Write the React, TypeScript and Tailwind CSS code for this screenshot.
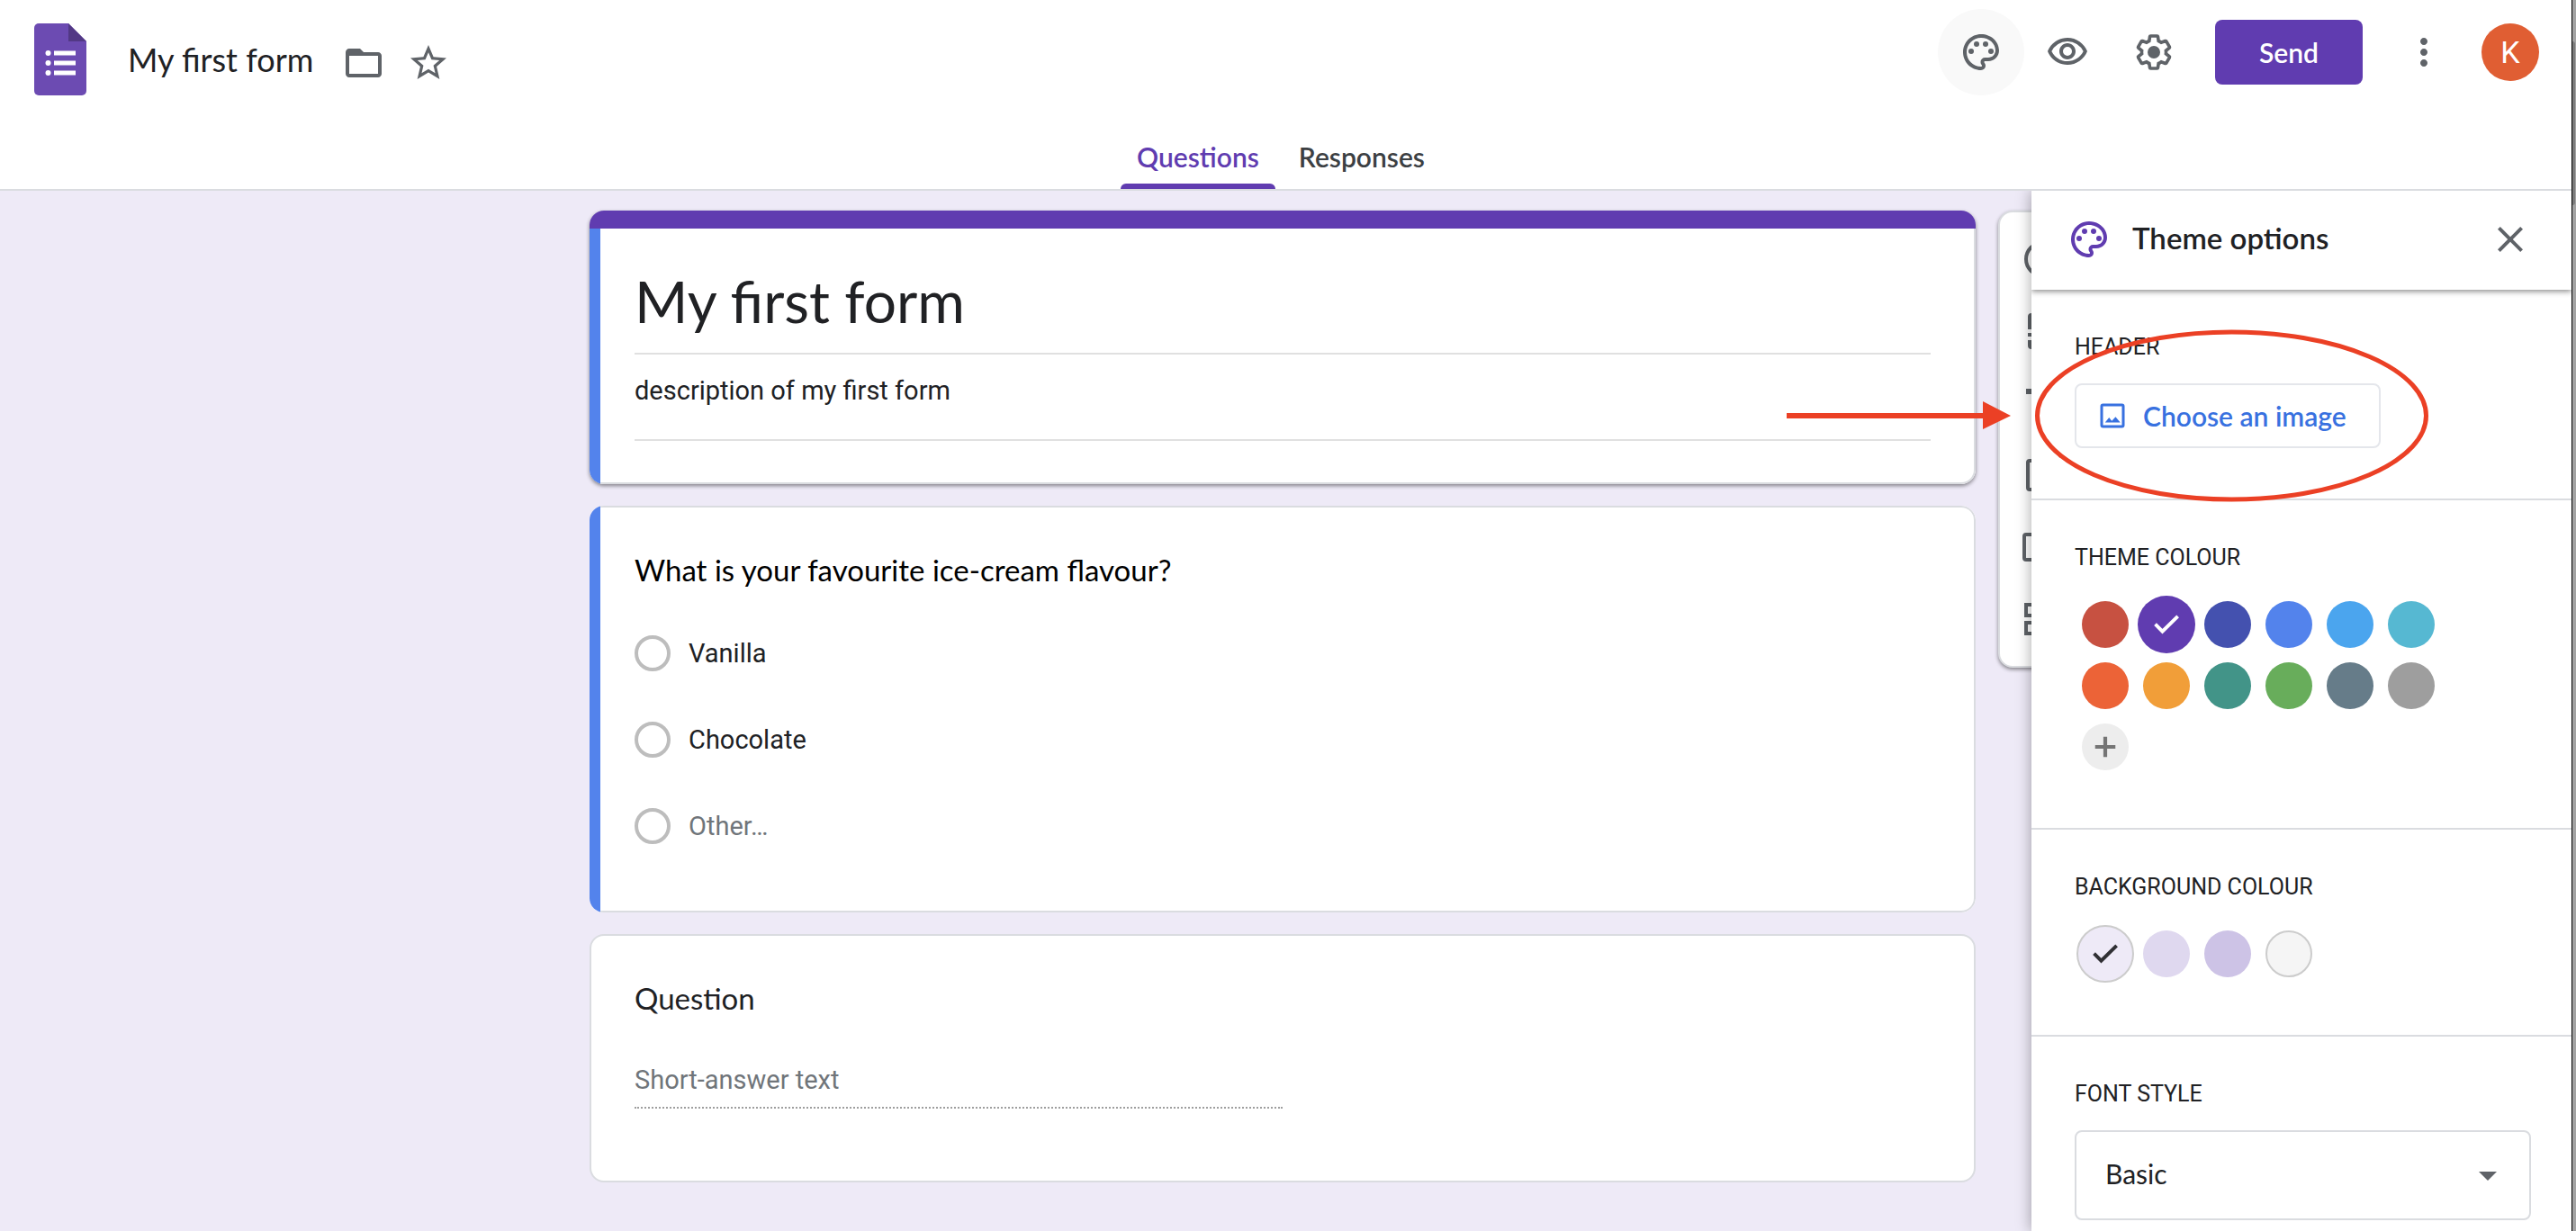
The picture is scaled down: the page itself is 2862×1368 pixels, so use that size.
import type { ReactNode } from 'react';
import {
  MdArrowDropDown,
  MdClose,
  MdFolderOpen,
  MdMoreVert,
  MdOutlinePalette,
  MdOutlineVisibility,
  MdStarBorder,
} from 'react-icons/md';

const themeColours = [
  { name: 'Red', fill: 'bg-[#c75141]' },
  { name: 'Purple', fill: 'bg-[#603cb0]' },
  { name: 'Indigo', fill: 'bg-[#4451af]' },
  { name: 'Blue', fill: 'bg-[#5383ec]' },
  { name: 'Light blue', fill: 'bg-[#4ba5ee]' },
  { name: 'Cyan', fill: 'bg-[#56b8d2]' },
  { name: 'Deep orange', fill: 'bg-[#ec6337]' },
  { name: 'Orange', fill: 'bg-[#f19e39]' },
  { name: 'Teal', fill: 'bg-[#429488]' },
  { name: 'Green', fill: 'bg-[#68ad5b]' },
  { name: 'Blue grey', fill: 'bg-[#667c89]' },
  { name: 'Grey', fill: 'bg-[#9e9e9e]' },
];

const backgroundColours = [
  { name: 'Light tint', fill: 'bg-[#eeeaf7] border-2 border-[#cccccc]' },
  { name: 'Medium tint', fill: 'bg-[#dfd8ef]' },
  { name: 'Dark tint', fill: 'bg-[#cdc3e6]' },
  { name: 'Neutral', fill: 'bg-[#f5f5f5] border-2 border-[#cccccc]' },
];

function FormsLogo() {
  return (
    <svg viewBox="0 0 58 80" className="h-20 w-[58px]" aria-hidden="true">
      <path d="M5 0H38L58 20V75a5 5 0 0 1-5 5H5a5 5 0 0 1-5-5V5a5 5 0 0 1 5-5z" fill="#6c4bb2" />
      <path d="M38 0L58 20H38z" fill="#523885" />
      <g fill="#fff">
        <circle cx="15.500" cy="33" r="3" />
        <circle cx="15.500" cy="44" r="3" />
        <circle cx="15.500" cy="55" r="3" />
        <path d="M22 30.500h24v5H22zM22 41.500h24v5H22zM22 52.500h24v5H22z" />
      </g>
    </svg>
  );
}

function GearIcon() {
  return (
    <svg viewBox="0 0 24 24" className="size-12" aria-hidden="true">
      <path
        transform="translate(1.200 1.200) scale(.9)"
        fill="none"
        stroke="currentColor"
        strokeWidth="2"
        d="M19.43 12.980c.04-.32.07-.64.07-.98 0-.34-.03-.66-.07-.98l2.110-1.650c.19-.15.24-.42.12-.64l-2-3.460c-.09-.16-.26-.25-.44-.25-.06 0-.12.01-.17.03l-2.490 1c-.52-.4-1.080-.73-1.690-.98l-.38-2.650C14.460 2.180 14.250 2 14 2h-4c-.25 0-.46.18-.49.42l-.38 2.650c-.61.25-1.170.59-1.690.98l-2.490-1c-.06-.02-.12-.03-.18-.03-.17 0-.34.09-.43.25l-2 3.460c-.13.22-.07.49.12.64l2.110 1.650c-.04.32-.07.65-.07.98 0 .33.03.66.07.98l-2.110 1.650c-.19.15-.24.42-.12.64l2 3.460c.09.16.26.25.44.25.06 0 .12-.01.17-.03l2.490-1c.52.4 1.080.73 1.690.98l.38 2.650c.03.24.24.42.49.42h4c.25 0 .46-.18.49-.42l.38-2.650c.61-.25 1.170-.59 1.690-.98l2.490 1c.06.02.12.03.18.03.17 0 .34-.09.43-.25l2-3.460c.12-.22.07-.49-.12-.64l-2.110-1.650z"
      />
      <circle cx="12" cy="12" r="3.500" fill="currentColor" />
    </svg>
  );
}

function ImageIcon() {
  return (
    <svg viewBox="0 0 24 24" className="size-9" aria-hidden="true">
      <rect x="4" y="4" width="16" height="16" rx="1" fill="none" stroke="currentColor" strokeWidth="2" />
      <path d="M6.500 17L9.500 13.300L11.500 15.800L14.300 12.800L17.800 17z" fill="currentColor" />
    </svg>
  );
}

function CheckIcon({ className }: { className: string }) {
  return (
    <svg viewBox="0 0 24 24" className={className} fill="none" stroke="currentColor" strokeWidth="2.600" aria-hidden="true">
      <path d="M3.700 11.800L9 17.100L20.400 5.900" />
    </svg>
  );
}

function PlusIcon({ className }: { className: string }) {
  return (
    <svg viewBox="0 0 24 24" className={className} fill="none" stroke="currentColor" strokeWidth="2.800" aria-hidden="true">
      <path d="M12 4.500v15M4.500 12h15" />
    </svg>
  );
}

function ToolIcon({ children }: { children: ReactNode }) {
  return (
    <svg viewBox="0 0 24 24" className="size-12" fill="none" stroke="currentColor" strokeWidth="2" aria-hidden="true">
      {children}
    </svg>
  );
}

const tools = [
  {
    label: 'Add question',
    icon: (
      <ToolIcon>
        <circle cx="12" cy="12" r="9" />
        <path d="M12 7v10M7 12h10" />
      </ToolIcon>
    ),
  },
  {
    label: 'Import questions',
    icon: (
      <ToolIcon>
        <path
          fill="currentColor"
          stroke="none"
          d="M4 11V4a2 2 0 0 1 2-2h8l6 6v3zM4 13h16v2H4zM4 17h16v3a2 2 0 0 1-2 2H6a2 2 0 0 1-2-2z"
        />
      </ToolIcon>
    ),
  },
  {
    label: 'Add title and description',
    icon: (
      <ToolIcon>
        <path fill="currentColor" stroke="none" d="M3 4v3h5v12h3V7h5V4H3zM22 9h-9v3h3v7h3v-7h3z" />
      </ToolIcon>
    ),
  },
  {
    label: 'Add image',
    icon: (
      <ToolIcon>
        <rect x="4" y="4" width="16" height="16" rx="1" />
        <path d="M7 16l3-4 2 3 3-4 3 5z" fill="currentColor" stroke="none" />
      </ToolIcon>
    ),
  },
  {
    label: 'Add video',
    icon: (
      <ToolIcon>
        <rect x="2" y="5" width="20" height="14" rx="1" />
        <path d="M10 8v8l6-4z" fill="currentColor" stroke="none" />
      </ToolIcon>
    ),
  },
  {
    label: 'Add section',
    icon: (
      <ToolIcon>
        <rect x="3" y="4" width="18" height="6" />
        <rect x="3" y="14" width="18" height="6" />
      </ToolIcon>
    ),
  },
];

function HeaderButton({ label, className = '', children }: { label: string; className?: string; children: ReactNode }) {
  return (
    <button type="button" aria-label={label} className={`flex size-24 items-center justify-center rounded-full text-[#5f6368] ${className}`}>
      {children}
    </button>
  );
}

function Header() {
  return (
    <header className="border-b-2 border-[#dadce0] bg-white">
      <div className="flex items-start justify-between pr-9 pl-[38px]">
        <div className="flex items-center pt-[26px]">
          <a href="#home" aria-label="Forms home">
            <FormsLogo />
          </a>
          <input
            aria-label="Document name"
            defaultValue="My first form"
            className="ml-[46px] h-12 [field-sizing:content] font-['Lato',sans-serif] text-[36px] leading-[48px] text-[#202124] outline-none"
          />
          <div className="flex gap-6 pt-2 pl-8 text-[#5f6368]">
            <button type="button" aria-label="Move to folder">
              <MdFolderOpen className="size-12" />
            </button>
            <button type="button" aria-label="Star">
              <MdStarBorder className="size-12" />
            </button>
          </div>
        </div>
        <div className="flex items-center pt-[10px]">
          <HeaderButton label="Customise theme" className="bg-[#f9f9f9]">
            <MdOutlinePalette className="size-12" />
          </HeaderButton>
          <HeaderButton label="Preview">
            <MdOutlineVisibility className="size-12" />
          </HeaderButton>
          <HeaderButton label="Settings">
            <GearIcon />
          </HeaderButton>
          <button
            type="button"
            className="mx-5 h-[72px] w-[164px] rounded-lg bg-[#603cb0] font-['Lato',sans-serif] text-[30px] font-semibold text-white"
          >
            Send
          </button>
          <HeaderButton label="More">
            <MdMoreVert className="size-12" />
          </HeaderButton>
          <button
            type="button"
            aria-label="Account"
            className="ml-4 size-16 rounded-full bg-[#e05e33] font-['Roboto',sans-serif] text-[34px] text-white"
          >
            K
          </button>
        </div>
      </div>
      <nav className="mt-[50px] flex justify-center gap-1.5 pr-[9px] font-['Lato',sans-serif] text-[30px] leading-9 font-semibold">
        <button type="button" className="text-[#603cb0]">
          <span className="block px-[18px] pb-3">Questions</span>
          <span className="block h-1.5 rounded-t-md bg-[#603cb0]" />
        </button>
        <button type="button" className="px-5 pb-[18px] text-[#3c4043]">
          Responses
        </button>
      </nav>
    </header>
  );
}

function TitleCard() {
  return (
    <section className="overflow-hidden rounded-2xl bg-white shadow-[0_2px_4px_rgba(0,0,0,0.45)]">
      <div className="h-5 bg-[#603cb0]" />
      <div className="flex">
        <div className="w-3 bg-[#5383ec]" />
        <div className="flex-1 rounded-br-2xl border-r-2 border-b-2 border-[#dadce0] pt-10 pr-12 pb-[46px] pl-[38px] text-[#202124]">
          <input
            aria-label="Form title"
            defaultValue="My first form"
            className="block h-[100px] w-full border-b-2 border-[#e0e0e0] pb-[18px] font-['Lato',sans-serif] text-[64px] leading-[80px] outline-none"
          />
          <input
            aria-label="Form description"
            defaultValue="description of my first form"
            className="mt-5 block h-[76px] w-full border-b-2 border-[#e0e0e0] pb-[34px] font-['Roboto',sans-serif] text-[29px] leading-10 outline-none"
          />
        </div>
      </div>
    </section>
  );
}

function Option({ label, className }: { label: string; className: string }) {
  return (
    <label className={`flex items-center gap-5 ${className}`}>
      <input type="radio" name="flavour" className="size-10 appearance-none rounded-full border-4 border-[#bdbdbd]" />
      {label}
    </label>
  );
}

function ChoiceCard() {
  return (
    <section className="flex overflow-hidden rounded-2xl bg-white">
      <div className="w-3 bg-[#5383ec]" />
      <div className="flex-1 rounded-r-2xl border-2 border-l-0 border-[#dadce0] pt-12 pr-12 pb-[74px] pl-[38px]">
        <h2 className="font-['Lato',sans-serif] text-[33px] leading-[42px] text-black">
          What is your favourite ice-cream flavour?
        </h2>
        <div className="mt-[52px] flex flex-col gap-14 font-['Roboto',sans-serif] text-[29px] leading-10">
          <Option label="Vanilla" className="text-[#202124]" />
          <Option label="Chocolate" className="text-[#202124]" />
          <Option label="Other…" className="text-[#70757a]" />
        </div>
      </div>
    </section>
  );
}

function ShortAnswerCard() {
  return (
    <section className="rounded-2xl border-2 border-[#dadce0] bg-white px-12 pt-12 pb-20">
      <label htmlFor="short-answer" className="block font-['Lato',sans-serif] text-[33px] leading-[42px] text-[#202124]">
        Question
      </label>
      <input
        id="short-answer"
        placeholder="Short-answer text"
        className="mt-[50px] block h-[52px] w-1/2 border-b-2 border-dotted border-[#9e9e9e] pb-2.5 font-['Roboto',sans-serif] text-[29px] leading-10 outline-none placeholder:text-[#70757a]"
      />
    </section>
  );
}

function Toolbar() {
  return (
    <div className="absolute top-0 left-full ml-[25px] flex w-[98px] flex-col items-center gap-8 rounded-2xl border-2 border-[#dadce0] bg-white py-7 text-[#5f6368] shadow-[0_2px_4px_rgba(0,0,0,0.45)]">
      {tools.map((tool) => (
        <button key={tool.label} type="button" aria-label={tool.label}>
          {tool.icon}
        </button>
      ))}
    </div>
  );
}

function Swatch({ group, name, fill, selected, tick }: { group: string; name: string; fill: string; selected: boolean; tick: string }) {
  return (
    <span className="relative flex size-[68px] items-center justify-center">
      <input
        type="radio"
        name={group}
        aria-label={name}
        defaultChecked={selected}
        className={`appearance-none rounded-full ${selected ? 'size-16' : 'size-[52px]'} ${fill}`}
      />
      {selected && <CheckIcon className={`pointer-events-none absolute size-9 ${tick}`} />}
    </span>
  );
}

function PanelSection({ title, children }: { title: string; children: ReactNode }) {
  return (
    <section className="relative border-b-2 border-[#dadce0] pt-[50px] pr-[45px] pb-14 pl-12 last:border-b-0 last:pb-3">
      <h3 className="mb-[26px] font-['Roboto',sans-serif] text-[25px] leading-7 text-[#202124]">{title}</h3>
      {children}
    </section>
  );
}

function Callout() {
  return (
    <svg
      viewBox="0 0 714 192"
      className="pointer-events-none absolute top-11 -left-[272px] h-48 w-[714px] max-w-none"
      aria-hidden="true"
    >
      <path d="M0 93H218V80L249 96L218 111V99H0z" fill="#eb4025" />
      <ellipse cx="494.500" cy="96" rx="216" ry="93" fill="none" stroke="#eb4025" strokeWidth="5" />
    </svg>
  );
}

function ThemePanel() {
  return (
    <aside className="absolute inset-y-0 right-0 w-[600px] bg-white shadow-[0_0_16px_rgba(0,0,0,0.35)]">
      <div className="flex h-[110px] items-center pr-11 pb-0.5 pl-10 shadow-[0_2px_6px_rgba(0,0,0,0.45)] [clip-path:inset(0_0_-16px_0)]">
        <MdOutlinePalette className="size-12 text-[#603cb0]" />
        <h2 className="flex-1 pb-1 pl-6 font-['Lato',sans-serif] text-[33px] leading-[42px] font-semibold text-[#202124]">
          Theme options
        </h2>
        <button type="button" aria-label="Close" className="text-[#5f6368]">
          <MdClose className="size-12" />
        </button>
      </div>
      <PanelSection title="HEADER">
        <button
          type="button"
          className="flex h-[72px] w-[340px] items-center gap-4 rounded-lg border-2 border-[#e4e6eb] pl-[22px] font-['Lato',sans-serif] text-[30px] font-semibold text-[#3871e0]"
        >
          <ImageIcon />
          Choose an image
        </button>
        <Callout />
      </PanelSection>
      <PanelSection title="THEME COLOUR">
        <div className="grid grid-cols-[repeat(6,68px)]">
          {themeColours.map((c) => (
            <Swatch key={c.name} group="theme-colour" name={c.name} fill={c.fill} selected={c.name === 'Purple'} tick="text-white" />
          ))}
          <span className="flex size-[68px] items-center justify-center">
            <button type="button" aria-label="Add custom colour" className="flex size-[52px] items-center justify-center rounded-full bg-[#ededed] text-[#757575]">
              <PlusIcon className="size-9" />
            </button>
          </span>
        </div>
      </PanelSection>
      <PanelSection title="BACKGROUND COLOUR">
        <div className="flex">
          {backgroundColours.map((c) => (
            <Swatch key={c.name} group="background-colour" name={c.name} fill={c.fill} selected={c.name === 'Light tint'} tick="text-[#303034]" />
          ))}
        </div>
      </PanelSection>
      <PanelSection title="FONT STYLE">
        <div className="relative">
          <select
            aria-label="Font style"
            className="h-[100px] w-full appearance-none rounded-lg border-2 border-[#dadce0] bg-white pb-1 pl-8 font-['Lato',sans-serif] text-[30px] text-[#202124] outline-none"
          >
            <option>Basic</option>
            <option>Decorative</option>
            <option>Formal</option>
            <option>Playful</option>
          </select>
          <MdArrowDropDown className="pointer-events-none absolute top-[26px] right-6 size-12 text-[#5f6368]" />
        </div>
      </PanelSection>
    </aside>
  );
}

export default function App() {
  return (
    <div className="flex min-h-screen bg-[#eeeaf7]">
      <div className="flex min-w-0 flex-1 flex-col">
        <Header />
        <main className="relative flex-1 overflow-hidden pt-[22px] pr-[7px] pb-12">
          <div className="relative mx-auto flex max-w-[1540px] flex-col gap-6">
            <TitleCard />
            <ChoiceCard />
            <ShortAnswerCard />
            <Toolbar />
          </div>
          <ThemePanel />
        </main>
      </div>
      <div className="w-[5px] border-l border-black bg-[#a3a3a3] pt-[46px]">
        <div className="h-[182px] w-[3px] rounded-r-full bg-[#7c7c7c]" />
      </div>
    </div>
  );
}
